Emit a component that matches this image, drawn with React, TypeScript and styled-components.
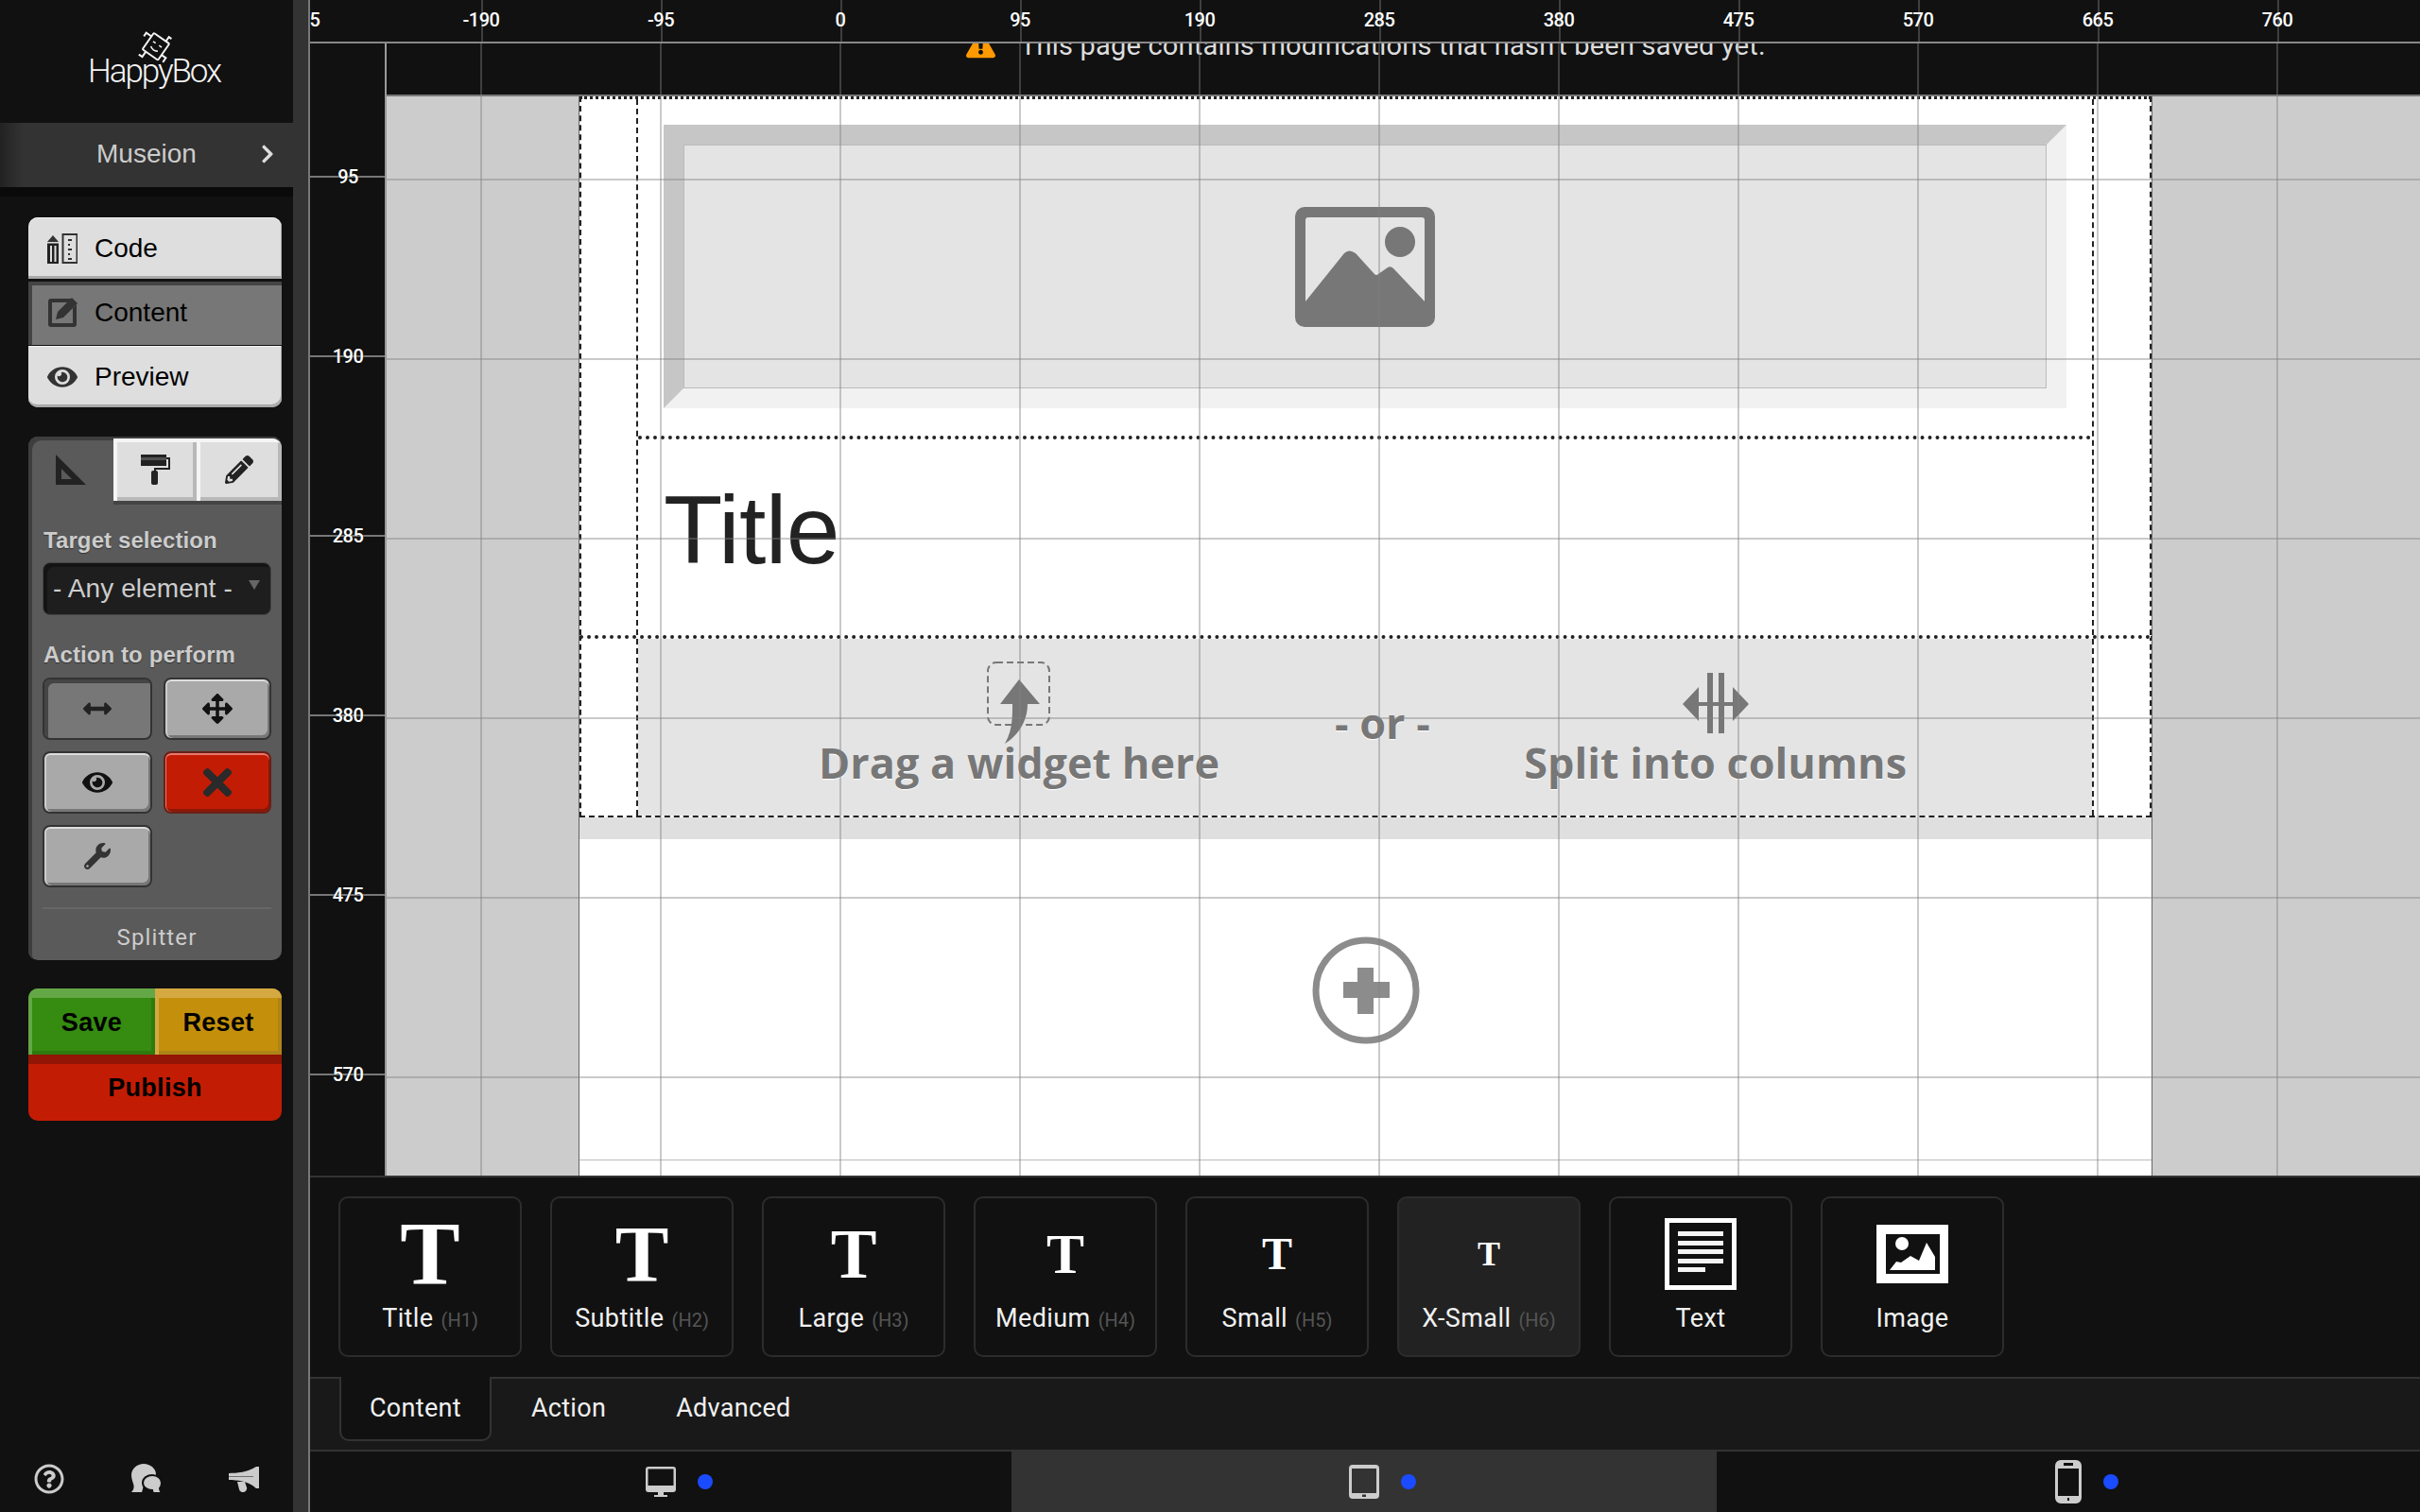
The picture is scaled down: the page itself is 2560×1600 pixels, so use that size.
import React from "react";
import styled, { createGlobalStyle } from "styled-components";
import {
  FaArrowsAlt,
  FaArrowsAltH,
  FaChevronRight,
  FaExclamationTriangle,
  FaEye,
  FaPencilAlt,
  FaRegQuestionCircle,
  FaTimes,
  FaWrench,
} from "react-icons/fa";

const GlobalStyle = createGlobalStyle`
  html, body { margin: 0; padding: 0; background: #111; }
  * { box-sizing: border-box; }
  #root { width: 2560px; height: 1600px; overflow: hidden; }
`;

const din = `Roboto, "Liberation Sans", sans-serif`;
const helv = `"Liberation Sans", Arial, sans-serif`;
const gridLine = "rgba(128,128,128,.42)";

const Shell = styled.div`
  display: flex;
  width: 2560px;
  height: 1600px;
  background: #111;
`;

/* ---------- sidebar ---------- */
const Sidebar = styled.aside`
  width: 310px;
  height: 1600px;
  display: flex;
  flex-direction: column;
  background: #111;
  flex: none;
`;
const Gutter = styled.div`
  width: 18px;
  flex: none;
  background: #333;
  border-right: 2px solid #777;
`;
const LogoBox = styled.div`
  height: 130px;
  display: flex;
  flex-direction: column;
  align-items: center;
  padding: 33px 0 0 16px;
`;
const LogoText = styled.div`
  font: 300 35px/36px Roboto, sans-serif;
  letter-spacing: -2.1px;
  color: #f4f4f4;
  margin-top: -11px;
`;
const ProjectBar = styled.div`
  height: 68px;
  display: flex;
  align-items: center;
  justify-content: space-between;
  padding: 0 16px 2px 102px;
  background: linear-gradient(90deg, #222 0, #333 24px);
  color: #ccc;
  font: 28px/66px ${helv};
`;
const ProjectShade = styled.div`
  height: 10px;
  background: #0a0a0a;
`;
const SideBody = styled.div`
  flex: 1;
  display: flex;
  flex-direction: column;
  padding: 22px 12px 20px 30px;
`;
const NavGroup = styled.nav`
  display: flex;
  flex-direction: column;
  height: 201px;
`;
const NavItem = styled.div<{ $active?: boolean; $pos: "top" | "mid" | "end" }>`
  height: ${(p) => (p.$pos === "mid" ? 67 : 65)}px;
  margin-top: ${(p) => (p.$pos === "mid" ? 3 : p.$pos === "end" ? 1 : 0)}px;
  display: flex;
  align-items: center;
  gap: 18px;
  padding-left: 20px;
  padding-bottom: ${(p) => (p.$pos === "mid" ? 2 : 0)}px;
  color: #000;
  font: 28px/32px ${helv};
  background: ${(p) => (p.$active ? "#777" : "#dedede")};
  border-radius: ${(p) => (p.$pos === "top" ? "10px 10px 0 0" : p.$pos === "end" ? "0 0 10px 10px" : "0")};
  box-shadow: ${(p) =>
    p.$active ? "inset 4px 4px 0 #444" : "inset -1px -3px 0 #aaa, inset 0 1px 0 #f2f2f2"};
  svg { flex: none; color: #333; }
`;
const Panel = styled.section`
  margin-top: 31px;
  height: 554px;
  background: #5a5a5a;
  border-radius: 10px;
  box-shadow: inset 4px 4px 0 #3e3e3e;
  display: flex;
  flex-direction: column;
`;
const PanelTabs = styled.div`
  display: flex;
  height: 68px;
  flex: none;
  padding-top: 2px;
`;
const PanelTab = styled.div<{ $active?: boolean; $w: number; $last?: boolean }>`
  width: ${(p) => p.$w}px;
  height: 66px;
  display: flex;
  align-items: center;
  justify-content: center;
  background: ${(p) => (p.$active ? "transparent" : "#dedede")};
  color: #222;
  border-top-right-radius: ${(p) => (p.$last ? "10px" : "0")};
  box-shadow: ${(p) =>
    p.$active ? "none" : "inset 4px 4px 0 #f5f5f5, inset -4px -4px 0 #b8b8b8, 0 4px 0 #444"};
`;
const PanelBody = styled.div`
  flex: 1;
  display: flex;
  flex-direction: column;
  padding: 27px 11px 0 15px;
`;
const FieldLabel = styled.div<{ $gap?: number }>`
  height: 30px;
  margin-top: ${(p) => p.$gap ?? 0}px;
  padding-left: 1px;
  color: #ccc;
  font: bold 24px/30px ${helv};
  letter-spacing: 0.1px;
  text-shadow: 0 1px 1px #333;
`;
const SelectBox = styled.div`
  height: 56px;
  margin-top: 8px;
  display: flex;
  align-items: center;
  justify-content: space-between;
  padding: 0 11px 0 10px;
  border-radius: 8px;
  background: #1e1e1e;
  border: 1px solid #444;
  box-shadow: inset 4px 4px 0 #141414;
  color: #ccc;
  font: 28px/54px ${helv};
  letter-spacing: 0.1px;
`;
const SelectCaret = styled.span`
  width: 0;
  height: 0;
  margin-top: -8px;
  border-left: 6px solid transparent;
  border-right: 6px solid transparent;
  border-top: 10px solid #666;
`;
const ActionGrid = styled.div`
  display: grid;
  grid-template-columns: 116px 114px;
  grid-auto-rows: 66px;
  gap: 12px;
  margin-top: 9px;
`;
const ActionButton = styled.div<{ $tone?: "on" | "danger" }>`
  display: flex;
  align-items: center;
  justify-content: center;
  border-radius: 8px;
  border: 2px solid ${(p) => (p.$tone === "danger" ? "#6a2018" : "#333")};
  color: ${(p) => (p.$tone === "danger" ? "#2a2a2a" : "#111")};
  background: ${(p) => (p.$tone === "on" ? "#777" : p.$tone === "danger" ? "#c31c05" : "#a9a9a9")};
  box-shadow: ${(p) =>
    p.$tone === "on"
      ? "inset 4px 4px 0 #454545"
      : p.$tone === "danger"
      ? "inset 0 2px 0 #e87a6c, inset 1px 0 0 #e87a6c, inset -1px -3px 0 #8c1706"
      : "inset 0 2px 0 #ddd, inset 2px 0 0 #ccc, inset -2px -3px 0 #777"};
`;
const PanelFoot = styled.div`
  margin-top: 21px;
  height: 55px;
  border-top: 2px solid #666;
  display: flex;
  justify-content: center;
  align-items: center;
  color: #ccc;
  font: 24px/30px ${din};
  letter-spacing: 1.1px;
  padding-top: 6px;
`;
const PublishGroup = styled.div`
  margin-top: 30px;
  border-radius: 10px;
  overflow: hidden;
  font: bold 27px/32px ${helv};
  letter-spacing: 0.3px;
  color: #000;
`;
const PublishRow = styled.div`
  display: flex;
  height: 70px;
`;
const SaveButton = styled.div`
  flex: 1;
  display: flex;
  align-items: center;
  justify-content: center;
  padding-top: 2px;
  background: #358c10;
  box-shadow: inset 4px 10px 0 #64a746, inset -4px -4px 0 #2e7a0e;
`;
const ResetButton = styled.div`
  flex: 1;
  display: flex;
  align-items: center;
  justify-content: center;
  padding-top: 2px;
  background: #c4900c;
  box-shadow: inset 4px 10px 0 #d5a942, inset -4px -4px 0 #ad8417;
`;
const PublishButton = styled.div`
  height: 70px;
  display: flex;
  align-items: center;
  justify-content: center;
  background: #c31c05;
  box-shadow: inset 0 10px 0 #931505;
`;
const SideFooter = styled.footer`
  margin-top: auto;
  display: flex;
  justify-content: space-between;
  align-items: center;
  width: 238px;
  margin-left: 6px;
  height: 30px;
  color: #ccc;
`;

/* ---------- main ---------- */
const Main = styled.main`
  flex: 1;
  min-width: 0;
  display: flex;
  flex-direction: column;
`;
const TopRuler = styled.div`
  position: relative;
  height: 46px;
  flex: none;
  overflow: hidden;
  background: #111;
  border-bottom: 2px solid #888;
`;
const TopTick = styled.span`
  position: absolute;
  top: 0;
  bottom: 0;
  width: 2px;
  background: ${gridLine};
`;
const TopLabel = styled.span`
  position: absolute;
  top: 8px;
  transform: translateX(-50%);
  color: #fff;
  font: 500 20px/27px ${din};
  letter-spacing: -0.5px;
`;
const Workspace = styled.div`
  flex: 1;
  min-height: 0;
  display: flex;
`;
const LeftRuler = styled.div`
  position: relative;
  width: 81px;
  flex: none;
  background: #111;
  border-right: 2px solid #999;
`;
const LeftTick = styled.span`
  position: absolute;
  left: 0;
  right: 0;
  height: 2px;
  background: #777;
`;
const LeftLabel = styled.span`
  position: absolute;
  left: 40px;
  transform: translate(-50%, -50%);
  color: #fff;
  font: 500 20px/24px ${din};
  letter-spacing: -0.5px;
  text-shadow: 0 0 2px #111;
`;
const Stage = styled.div`
  position: relative;
  flex: 1;
  min-width: 0;
  display: flex;
  flex-direction: column;
`;
const GridLayer = styled.div`
  position: absolute;
  inset: 0;
  overflow: hidden;
  pointer-events: none;
  z-index: 3;
`;
const VLine = styled.span`
  position: absolute;
  top: 0;
  bottom: 0;
  width: 2px;
  background: ${gridLine};
`;
const HLine = styled.span`
  position: absolute;
  left: 0;
  right: 0;
  height: 2px;
  background: ${gridLine};
`;
const Notice = styled.div`
  height: 54px;
  flex: none;
  overflow: hidden;
  display: flex;
  align-items: flex-start;
  gap: 26px;
  padding-left: 613px;
  background: #111;
  color: #ddd;
  font: 29px/34px ${din};
  letter-spacing: 0.2px;
`;
const NoticeIcon = styled(FaExclamationTriangle)`
  flex: none;
  color: #f90;
  margin-top: -14px;
`;
const NoticeText = styled.span`
  margin-top: -15px;
  white-space: nowrap;
`;
const Canvas = styled.div`
  flex: 1;
  min-height: 0;
  background: #ccc;
  padding-left: 203px;
  border-top: 2px solid #777;
`;
const Page = styled.div`
  width: 1665px;
  height: 100%;
  display: flex;
  flex-direction: column;
  background: #fff;
  border-left: 1px solid #666;
  border-right: 1px solid #666;
`;
const PageRow = styled.div<{ $h: number; $closed?: boolean; $heavy?: boolean }>`
  height: ${(p) => p.$h}px;
  flex: none;
  padding: 0 59px 0 58px;
  border-top: ${(p) => (p.$heavy ? 4 : 3)}px dotted #222;
  border-left: 2px dashed #222;
  border-right: 2px dashed #222;
  border-bottom: ${(p) => (p.$closed ? "2px dashed #222" : "0")};
`;
const PageColumn = styled.div`
  height: 100%;
  display: flex;
  flex-direction: column;
  border-left: 2px dashed #222;
  border-right: 2px dashed #222;
`;
const ImageWidget = styled.div`
  height: 356px;
  padding: 27px 27px 0;
  flex: none;
`;
const ImageFrame = styled.div`
  height: 300px;
  display: flex;
  align-items: center;
  justify-content: center;
  background: #e4e4e4;
  border-style: solid;
  border-width: 21px;
  border-color: #c6c6c6 #f1f1f1 #f1f1f1 #c6c6c6;
  box-shadow: inset 0 0 0 1px #bbb;
`;
const TitleWidget = styled.div`
  flex: 1;
  border-top: 4px dotted #222;
  padding: 0 27px 16px;
  display: flex;
  align-items: center;
`;
const TitleText = styled.h1`
  margin: 0;
  font: 400 102px/110px ${helv};
  letter-spacing: -0.6px;
  color: #222;
`;
const DropZone = styled.div`
  height: 100%;
  display: flex;
  align-items: flex-start;
  padding-left: 103px;
  background: #e4e4e4;
  color: #777;
  font: 700 45px/50px "Open Sans", sans-serif;
  text-shadow: 0 1px 1px #fff;
`;
const DropOption = styled.div`
  width: 600px;
  flex: none;
  padding-top: 23px;
  display: flex;
  flex-direction: column;
  align-items: center;
`;
const IconSlot = styled.div`
  height: 90px;
  display: flex;
  align-items: center;
  justify-content: center;
`;
const DropLabel = styled.div`
  margin-top: -7px;
  white-space: nowrap;
`;
const OrText = styled.div`
  flex: none;
  margin: 64px 2px 0 34px;
`;
const RowBand = styled.div`
  height: 23px;
  flex: none;
  background: #dfdfdf;
`;
const AddSection = styled.div`
  height: 340px;
  flex: none;
  display: flex;
  align-items: center;
  justify-content: center;
  padding-bottom: 20px;
  border-bottom: 1px solid #bbb;
`;

/* ---------- bottom ---------- */
const WidgetBar = styled.div`
  height: 213px;
  flex: none;
  display: flex;
  gap: 30px;
  padding: 20px 0 0 30px;
  background: #111;
  border-top: 2px solid #333;
`;
const WidgetCard = styled.div<{ $active?: boolean }>`
  width: 194px;
  height: 170px;
  display: flex;
  flex-direction: column;
  align-items: center;
  border: 2px solid #2c2c2c;
  border-radius: 10px;
  background: ${(p) => (p.$active ? "#222" : "#111")};
`;
const WidgetIcon = styled.div`
  height: 118px;
  margin-bottom: -6px;
  flex: none;
  display: flex;
  align-items: center;
  justify-content: center;
`;
const SerifT = styled.span<{ $size: number }>`
  font: bold ${(p) => p.$size}px/1 "Liberation Serif", serif;
  color: #fff;
`;
const WidgetLabel = styled.div`
  color: #f0f0f0;
  font: 27px/30px ${din};
  letter-spacing: 0.4px;
  white-space: nowrap;
`;
const WidgetTag = styled.span`
  color: #555;
  font-size: 20px;
  letter-spacing: 0;
  margin-left: 8px;
`;
const TabBar = styled.div`
  height: 79px;
  flex: none;
  display: flex;
  gap: 42px;
  padding-left: 31px;
  background: #191919;
  border-top: 2px solid #333;
  border-bottom: 2px solid #333;
`;
const TabItem = styled.div<{ $active?: boolean }>`
  height: ${(p) => (p.$active ? "68px" : "62px")};
  margin-top: ${(p) => (p.$active ? "-2px" : "0")};
  padding: ${(p) => (p.$active ? "0 30px" : "0 32px 0 0")};
  display: flex;
  align-items: center;
  color: #f0f0f0;
  font: 27px/30px ${din};
  letter-spacing: 0.3px;
  background: ${(p) => (p.$active ? "#111" : "transparent")};
  border: ${(p) => (p.$active ? "2px solid #333" : "0")};
  border-top: 0;
  border-radius: 0 0 10px 10px;
`;
const DeviceBar = styled.div`
  height: 64px;
  flex: none;
  display: grid;
  grid-template-columns: 742px 746px 744px;
  background: #111;
`;
const DeviceCell = styled.div<{ $active?: boolean }>`
  display: flex;
  align-items: center;
  justify-content: center;
  gap: 23px;
  padding-left: 39px;
  background: ${(p) => (p.$active ? "#333" : "#111")};
`;
const DeviceDot = styled.span`
  width: 16px;
  height: 16px;
  border-radius: 50%;
  background: #1a4bff;
  flex: none;
`;

/* ---------- drawings ---------- */
const RobotLogo = () => (
  <svg width="40" height="36" viewBox="0 0 36 32" fill="none" stroke="#f4f4f4" strokeWidth="1.8">
    <g transform="rotate(35 20 14)">
      <rect x="11" y="5" width="18" height="19" rx="1" />
      <path d="M15 12h3M22 12h3M16 17c2 2 6 2 8 0" strokeWidth="1.4" />
      <path d="M11 9H5v4M29 18h5v5M15 24v6h-4M25 5V0h3" />
    </g>
  </svg>
);
const CodeIcon = () => (
  <svg width="32" height="32" viewBox="0 0 32 32">
    <path d="M0 9l6-7 6 7z" fill="#333" />
    <path d="M0 10.500h12V32H0z" fill="#222" />
    <path d="M3 13h2v17H3zM7.500 13h2v17h-2z" fill="#dedede" />
    <rect x="16.500" y="1" width="15" height="30" fill="none" stroke="#333" strokeWidth="2" />
    <path d="M22 6h4v2h-4zM22 11h2v2h-2zM22 16h4v2h-4zM22 21h2v2h-2zM22 26h4v2h-4z" fill="#333" />
  </svg>
);
const EditIcon = () => (
  <svg width="32" height="32" viewBox="0 0 32 32">
    <path fillRule="evenodd" fill="#333" d="M4 1h23l-4 4H5v22h22V11l4-4v21a3 3 0 0 1-3 3H4a3 3 0 0 1-3-3V4a3 3 0 0 1 3-3z" />
    <path d="M26 0l6 6-15 15-8 2 2-8z" fill="#333" />
  </svg>
);
const SetSquareIcon = () => (
  <svg width="32" height="32" viewBox="0 0 32 32">
    <path fillRule="evenodd" d="M0 0L32 32H0zM6 15v11h11z" fill="#222" />
  </svg>
);
const RollerIcon = () => (
  <svg width="32" height="32" viewBox="0 0 32 32">
    <path d="M1 0h27v12H1z" fill="#222" />
    <path d="M1 3h27v3H1z" fill="#dedede" opacity=".25" />
    <path d="M28 4h3v11H16v2" fill="none" stroke="#222" strokeWidth="2" />
    <rect x="12" y="17" width="7" height="15" rx="2" fill="#222" />
  </svg>
);
const PageImageIcon = () => (
  <svg width="148" height="127" viewBox="0 0 148 127">
    <path
      fillRule="evenodd"
      fill="#777"
      d="M10 0h128a10 10 0 0 1 10 10v107a10 10 0 0 1-10 10H10a10 10 0 0 1-10-10V10A10 10 0 0 1 10 0zM14 11a3 3 0 0 0-3 3V100L52 49Q57 44 64 49L84 71Q86 73 88 71L98 64Q101 62 104 65L137 100V14a3 3 0 0 0-3-3z"
    />
    <circle cx="111" cy="37" r="16" fill="#777" />
  </svg>
);
const DragIcon = () => (
  <svg width="70" height="90" viewBox="0 0 70 90">
    <rect x="2" y="2" width="65" height="66" rx="9" fill="none" stroke="#777" strokeWidth="2" strokeDasharray="7 4" />
    <path d="M35 20L57 46H44C44 62 36 78 20 88C28 74 28 60 28 46H15Z" fill="#777" />
  </svg>
);
const SplitIcon = () => (
  <svg width="72" height="66" viewBox="0 0 72 66">
    <path d="M27 1h6v64h-6zM39 1h6v64h-6zM18 16v36L1 34zM54 16v36l17-18zM18 32h9v4h-9zM45 32h9v4h-9zM33 32h6v4h-6z" fill="#777" />
  </svg>
);
const AddIcon = () => (
  <svg width="114" height="114" viewBox="0 0 114 114">
    <circle cx="57" cy="57" r="53" fill="none" stroke="#8c8c8c" strokeWidth="7" />
    <path d="M48 33h17v15h17v17H65v17H48V65H33V48h15z" fill="#8c8c8c" />
  </svg>
);
const TextDocIcon = () => (
  <svg width="76" height="76" viewBox="0 0 76 76">
    <path fillRule="evenodd" fill="#fff" d="M0 0h76v76H0zM5 5v66h66V5z" />
    <path d="M14 14h48v5H14zM14 24h48v5H14zM14 33h48v5H14zM14 43h48v5H14zM14 52h29v5H14z" fill="#f4f4f4" />
  </svg>
);
const PictureIcon = () => (
  <svg width="76" height="62" viewBox="0 0 76 62">
    <path fillRule="evenodd" fill="#fff" d="M0 0h76v62H0zM10 10v42h57V10z" />
    <circle cx="27" cy="20" r="7" fill="#fff" />
    <path d="M14 48l7-9 5 1 10-7 9 5 8-19 9 15v14z" fill="#fff" />
  </svg>
);
const DesktopIcon = () => (
  <svg width="32" height="32" viewBox="0 0 32 32">
    <path fillRule="evenodd" fill="#ccc" d="M3 0h26a3 3 0 0 1 3 3v21a3 3 0 0 1-3 3H3a3 3 0 0 1-3-3V3a3 3 0 0 1 3-3zM2.500 2.500V20h27V2.500z" />
    <path d="M13 27h6v3h4v2H9v-2h4z" fill="#ccc" />
  </svg>
);
const TabletIcon = () => (
  <svg width="32" height="36" viewBox="0 0 32 36">
    <path fillRule="evenodd" fill="#ccc" d="M4 0h24a4 4 0 0 1 4 4v28a4 4 0 0 1-4 4H4a4 4 0 0 1-4-4V4a4 4 0 0 1 4-4zM3 4v26h26V4zM14 31.500v2.500h4v-2.500z" />
  </svg>
);
const PhoneIcon = () => (
  <svg width="28" height="46" viewBox="0 0 28 46">
    <path fillRule="evenodd" fill="#ccc" d="M6 0h16a6 6 0 0 1 6 6v34a6 6 0 0 1-6 6H6a6 6 0 0 1-6-6V6a6 6 0 0 1 6-6zM9 3v3h10V3zM3 9v29h22V9zM13 40v3h2v-3z" />
  </svg>
);
const BubblesIcon = () => (
  <svg width="32" height="32" viewBox="0 0 32 32">
    <path d="M13 0c7 0 13 5 13 11 0 7-6 12-13 12-1 2-1 5-2 7H0c3-3 3-6 2-9-1-3-2-6-2-9C0 5 6 0 13 0z" fill="#ccc" />
    <path d="M22 12c6 0 10 4 10 8 0 3-1 5-2 6 0 2 1 3 2 5h-9c-1-2-1-3-1-3-5 0-10-3-10-8s5-8 10-8z" fill="#ccc" stroke="#111" strokeWidth="2" />
  </svg>
);
const MegaphoneIcon = () => (
  <svg width="32" height="28" viewBox="0 0 32 28">
    <path d="M0 8C9 8 20 7 29 1h3v23h-3C23 18 12 15 0 15z" fill="#ccc" />
    <path d="M0 11h26v1H0z" fill="#111" opacity=".5" />
    <path d="M9 17h8l2 6a4 4 0 0 1-8 2z" fill="#ccc" />
  </svg>
);

/* ---------- data ---------- */
const topMarks = Array.from({ length: 12 }, (_, i) => ({ value: -285 + i * 95, x: -9 + i * 190 }));
const leftMarks = Array.from({ length: 6 }, (_, i) => ({ value: 95 + i * 95, y: 141 + i * 190 }));
const vLines = Array.from({ length: 11 }, (_, i) => 99 + i * 190);
const hLines = Array.from({ length: 6 }, (_, i) => 143 + i * 190);
const headings = [
  { name: "Title", tag: "(H1)", size: 95 },
  { name: "Subtitle", tag: "(H2)", size: 85 },
  { name: "Large", tag: "(H3)", size: 73 },
  { name: "Medium", tag: "(H4)", size: 60 },
  { name: "Small", tag: "(H5)", size: 48 },
  { name: "X-Small", tag: "(H6)", size: 36, active: true },
];

export default function App() {
  return (
    <>
      <GlobalStyle />
      <Shell>
        <Sidebar>
          <LogoBox>
            <RobotLogo />
            <LogoText>HappyBox</LogoText>
          </LogoBox>
          <ProjectBar>
            <span>Museion</span>
            <FaChevronRight size={22} color="#ddd" />
          </ProjectBar>
          <ProjectShade />
          <SideBody>
            <NavGroup>
              <NavItem $pos="top">
                <CodeIcon />
                Code
              </NavItem>
              <NavItem $pos="mid" $active>
                <EditIcon />
                Content
              </NavItem>
              <NavItem $pos="end">
                <FaEye size={32} />
                Preview
              </NavItem>
            </NavGroup>
            <Panel>
              <PanelTabs>
                <PanelTab $w={90} $active>
                  <SetSquareIcon />
                </PanelTab>
                <PanelTab $w={88}>
                  <RollerIcon />
                </PanelTab>
                <PanelTab $w={90} $last>
                  <FaPencilAlt size={30} />
                </PanelTab>
              </PanelTabs>
              <PanelBody>
                <FieldLabel>Target selection</FieldLabel>
                <SelectBox>
                  <span>- Any element -</span>
                  <SelectCaret />
                </SelectBox>
                <FieldLabel $gap={27}>Action to perform</FieldLabel>
                <ActionGrid>
                  <ActionButton $tone="on">
                    <FaArrowsAltH size={30} color="#222" />
                  </ActionButton>
                  <ActionButton>
                    <FaArrowsAlt size={32} />
                  </ActionButton>
                  <ActionButton>
                    <FaEye size={32} />
                  </ActionButton>
                  <ActionButton $tone="danger">
                    <FaTimes size={44} />
                  </ActionButton>
                  <ActionButton>
                    <FaWrench size={28} color="#333" />
                  </ActionButton>
                </ActionGrid>
                <PanelFoot>Splitter</PanelFoot>
              </PanelBody>
            </Panel>
            <PublishGroup>
              <PublishRow>
                <SaveButton>Save</SaveButton>
                <ResetButton>Reset</ResetButton>
              </PublishRow>
              <PublishButton>Publish</PublishButton>
            </PublishGroup>
            <SideFooter>
              <FaRegQuestionCircle size={32} />
              <BubblesIcon />
              <MegaphoneIcon />
            </SideFooter>
          </SideBody>
        </Sidebar>
        <Gutter />
        <Main>
          <TopRuler>
            {topMarks.map((m) => (
              <React.Fragment key={m.value}>
                <TopTick style={{ left: m.x }} />
                <TopLabel style={{ left: m.x }}>{m.value}</TopLabel>
              </React.Fragment>
            ))}
          </TopRuler>
          <Workspace>
            <LeftRuler>
              {leftMarks.map((m) => (
                <React.Fragment key={m.value}>
                  <LeftTick style={{ top: m.y - 1 }} />
                  <LeftLabel style={{ top: m.y }}>{m.value}</LeftLabel>
                </React.Fragment>
              ))}
            </LeftRuler>
            <Stage>
              <GridLayer>
                {vLines.map((x) => (
                  <VLine key={x} style={{ left: x }} />
                ))}
                {hLines.map((y) => (
                  <HLine key={y} style={{ top: y }} />
                ))}
              </GridLayer>
              <Notice>
                <NoticeIcon size={31} />
                <NoticeText>This page contains modifications that hasn't been saved yet.</NoticeText>
              </Notice>
              <Canvas>
                <Page>
                  <PageRow $h={570}>
                    <PageColumn>
                      <ImageWidget>
                        <ImageFrame>
                          <PageImageIcon />
                        </ImageFrame>
                      </ImageWidget>
                      <TitleWidget>
                        <TitleText>Title</TitleText>
                      </TitleWidget>
                    </PageColumn>
                  </PageRow>
                  <PageRow $h={193} $closed $heavy>
                    <PageColumn>
                      <DropZone>
                        <DropOption>
                          <IconSlot>
                            <DragIcon />
                          </IconSlot>
                          <DropLabel>Drag a widget here</DropLabel>
                        </DropOption>
                        <OrText>- or -</OrText>
                        <DropOption>
                          <IconSlot>
                            <SplitIcon />
                          </IconSlot>
                          <DropLabel>Split into columns</DropLabel>
                        </DropOption>
                      </DropZone>
                    </PageColumn>
                  </PageRow>
                  <RowBand />
                  <AddSection>
                    <AddIcon />
                  </AddSection>
                </Page>
              </Canvas>
            </Stage>
          </Workspace>
          <WidgetBar>
            {headings.map((h) => (
              <WidgetCard key={h.name} $active={h.active}>
                <WidgetIcon>
                  <SerifT $size={h.size}>T</SerifT>
                </WidgetIcon>
                <WidgetLabel>
                  {h.name}
                  <WidgetTag>{h.tag}</WidgetTag>
                </WidgetLabel>
              </WidgetCard>
            ))}
            <WidgetCard>
              <WidgetIcon>
                <TextDocIcon />
              </WidgetIcon>
              <WidgetLabel>Text</WidgetLabel>
            </WidgetCard>
            <WidgetCard>
              <WidgetIcon>
                <PictureIcon />
              </WidgetIcon>
              <WidgetLabel>Image</WidgetLabel>
            </WidgetCard>
          </WidgetBar>
          <TabBar>
            <TabItem $active>Content</TabItem>
            <TabItem>Action</TabItem>
            <TabItem>Advanced</TabItem>
          </TabBar>
          <DeviceBar>
            <DeviceCell>
              <DesktopIcon />
              <DeviceDot />
            </DeviceCell>
            <DeviceCell $active>
              <TabletIcon />
              <DeviceDot />
            </DeviceCell>
            <DeviceCell>
              <PhoneIcon />
              <DeviceDot />
            </DeviceCell>
          </DeviceBar>
        </Main>
      </Shell>
    </>
  );
}
